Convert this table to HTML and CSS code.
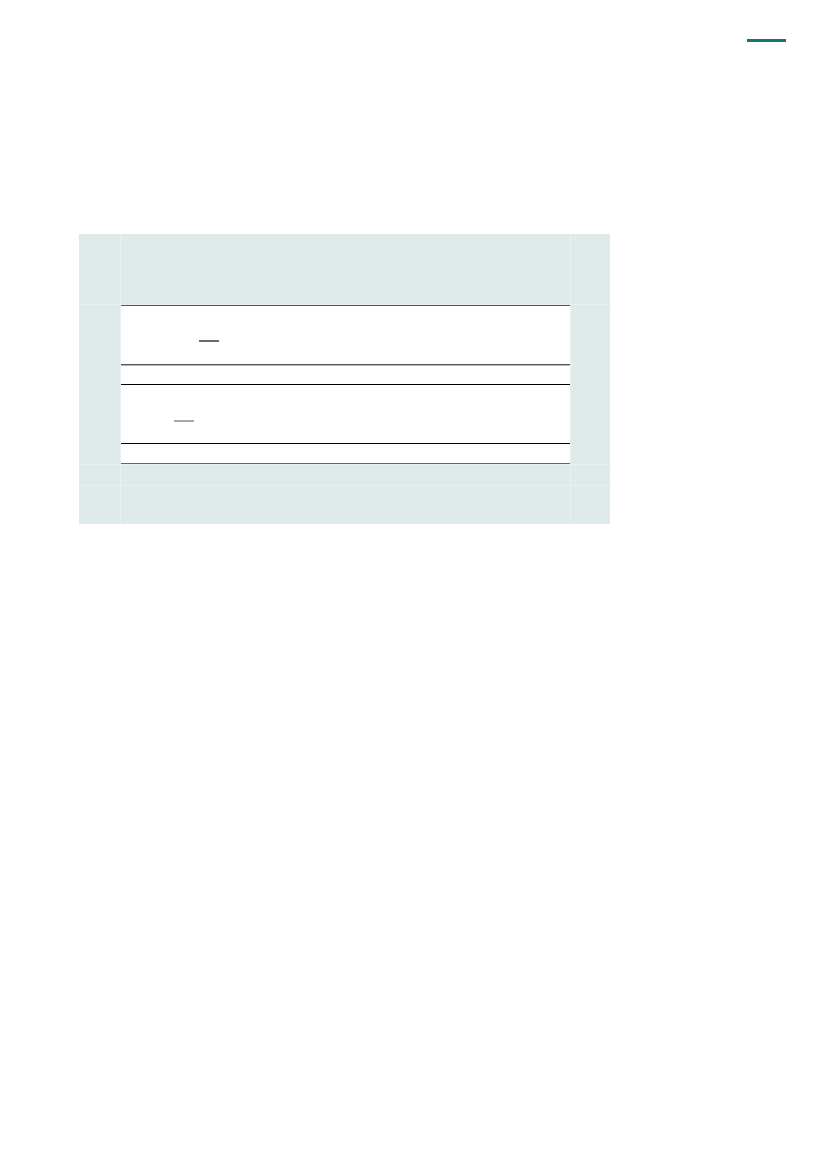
FILE: index.html
```html
<!DOCTYPE html>
<html lang="en">
<head>
<meta charset="utf-8">
<title>Page</title>
<link rel="stylesheet" href="styles.css">
</head>
<body>
<div class="page">
  <header class="topbar"><span class="rule"></span></header>
  <section class="figure">
    <div class="cell"></div><div class="cell"></div><div class="cell"></div>
    <div class="cell"></div>
    <div class="table">
      <div class="row row-a"><span class="dash dash-dark"></span></div>
      <div class="row row-b"></div>
      <div class="row row-c"><span class="dash dash-light"></span></div>
      <div class="row row-d"></div>
    </div>
    <div class="cell"></div>
    <div class="cell"></div><div class="cell"></div><div class="cell"></div>
    <div class="cell"></div><div class="cell"></div><div class="cell"></div>
  </section>
</div>
</body>
</html>
```

FILE: styles.css
```css
html, body {
  margin: 0;
  padding: 0;
  background: #ffffff;
  font-family: "Liberation Sans", Arial, sans-serif;
}

.page {
  width: 827px;
  min-height: 1169px;
  padding-top: 39px;
  box-sizing: border-box;
}

.topbar {
  display: flex;
  justify-content: flex-end;
  padding-right: 41px;
}

.rule {
  display: block;
  width: 39px;
  height: 3px;
  background: #17707a;
}

.figure {
  margin-top: 192px;
  margin-left: 79px;
  width: 531px;
  display: grid;
  grid-template-columns: 41px 449px 39px;
  grid-template-rows: 70px 159px 20px 38px;
  gap: 1px;
  background: #e8f1f1;
}

.cell {
  background: #dfebeb;
}

.table {
  background: #ffffff;
  display: flex;
  flex-direction: column;
}

.row {
  box-sizing: content-box;
}

.row-a {
  border-top: 1px solid #555555;
  height: 58px;
  padding-left: 78px;
  padding-top: 0;
  position: relative;
}

.row-b {
  border-top: 1px solid #555555;
  box-shadow: inset 0 1px 0 #b8b8b8;
  height: 19px;
}

.row-c {
  border-top: 1px solid #000000;
  height: 58px;
  padding-left: 53px;
}

.row-d {
  border-top: 1px solid #000000;
  border-bottom: 1px solid #666666;
  height: 19px;
}

.dash {
  display: block;
  width: 20px;
  height: 2px;
}

.dash-dark {
  margin-top: 34px;
  background: #6a6a6a;
}

.dash-light {
  margin-top: 35px;
  background: #a8a8a8;
}
```
